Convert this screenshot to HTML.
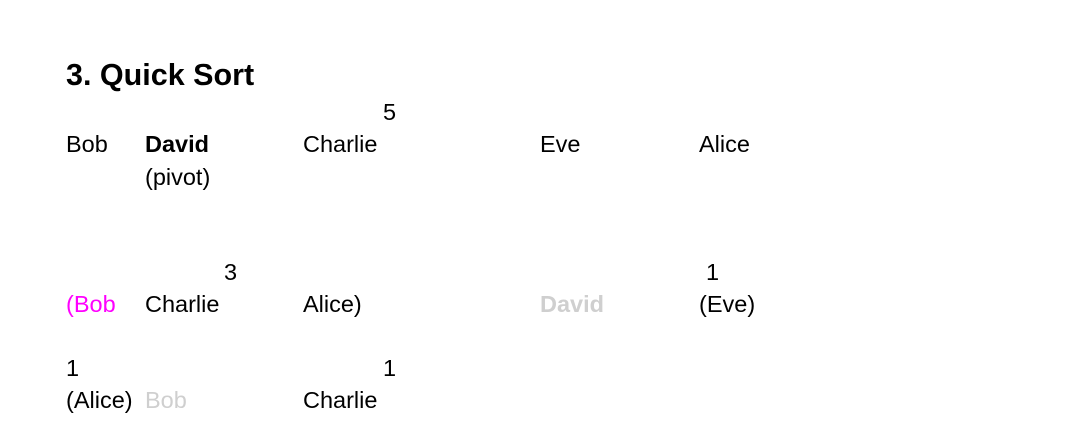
<!DOCTYPE html>
<html><head><meta charset="utf-8"><style>
html,body{margin:0;padding:0;background:#fff;width:1073px;height:443px;overflow:hidden}
body{position:relative;font-family:"Liberation Sans",Arial,sans-serif;color:#000}
.t{position:absolute;font-size:23.5px;line-height:24px;white-space:nowrap}
.h{position:absolute;left:66px;top:58px;font-size:30.5px;font-weight:bold;line-height:34px}
.b{font-weight:bold}
.g{color:#cfcfcf}
.m{color:#ff00ff}
</style></head><body>
<div class="h">3. Quick Sort</div>
<div class="t" style="left:383px;top:100px">5</div>
<div class="t" style="left:66px;top:132px">Bob</div>
<div class="t b" style="left:145px;top:132px">David</div>
<div class="t" style="left:145px;top:165px">(pivot)</div>
<div class="t" style="left:303px;top:132px">Charlie</div>
<div class="t" style="left:540px;top:132px">Eve</div>
<div class="t" style="left:699px;top:132px">Alice</div>

<div class="t" style="left:224px;top:260px">3</div>
<div class="t" style="left:706px;top:260px">1</div>
<div class="t m" style="left:66px;top:292px">(Bob</div>
<div class="t" style="left:145px;top:292px">Charlie</div>
<div class="t" style="left:303px;top:292px">Alice)</div>
<div class="t b g" style="left:540px;top:292px">David</div>
<div class="t" style="left:699px;top:292px">(Eve)</div>

<div class="t" style="left:66px;top:356px">1</div>
<div class="t" style="left:383px;top:356px">1</div>
<div class="t" style="left:66px;top:388px">(Alice)</div>
<div class="t g" style="left:145px;top:388px">Bob</div>
<div class="t" style="left:303px;top:388px">Charlie</div>
</body></html>
